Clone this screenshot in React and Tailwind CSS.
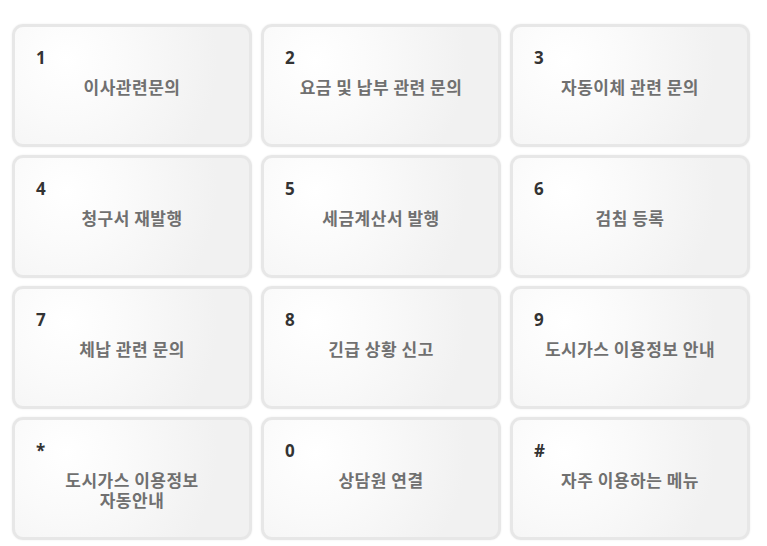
import React from 'react';

const keys = [
  { key: '1', label: ['이사관련문의'] },
  { key: '2', label: ['요금 및 납부 관련 문의'] },
  { key: '3', label: ['자동이체 관련 문의'] },
  { key: '4', label: ['청구서 재발행'] },
  { key: '5', label: ['세금계산서 발행'] },
  { key: '6', label: ['검침 등록'] },
  { key: '7', label: ['체납 관련 문의'] },
  { key: '8', label: ['긴급 상황 신고'] },
  { key: '9', label: ['도시가스 이용정보 안내'] },
  { key: '*', label: ['도시가스 이용정보', '자동안내'] },
  { key: '0', label: ['상담원 연결'] },
  { key: '#', label: ['자주 이용하는 메뉴'] },
];

const KeyCard = ({ item }) => (
  <button
    type="button"
    className="h-[123px] rounded-[11px] border-[3px] border-[#e7e7e7] bg-[radial-gradient(circle_at_22%_28%,#ffffff_0%,#fafafa_30%,#f1f1f1_75%)] shadow-[0_0_2px_rgba(0,0,0,0.08)] flex flex-col items-stretch text-left pt-[21px] px-[21px]"
  >
    <span className="h-[20px] leading-[20px] text-[17px] font-bold text-[#333] font-['Noto_Sans',sans-serif]">
      {item.key}
    </span>
    <span className="mt-[9px] text-center text-[17px] tracking-[0.5px] leading-[20px] font-semibold text-[#707070] font-['Noto_Sans_CJK_KR',sans-serif]">
      {item.label.map((line) => (
        <span key={line} className="block">{line}</span>
      ))}
    </span>
  </button>
);

export default function App() {
  return (
    <div className="w-[767px] h-[546px] bg-white pt-[24px] pl-[12px] pr-[17px]">
      {/* 전화 ARS 메뉴 키패드 */}
      <div className="grid grid-cols-3 gap-x-[9px] gap-y-[8px]">
        {keys.map((item) => (
          <KeyCard key={item.key} item={item} />
        ))}
      </div>
    </div>
  );
}
